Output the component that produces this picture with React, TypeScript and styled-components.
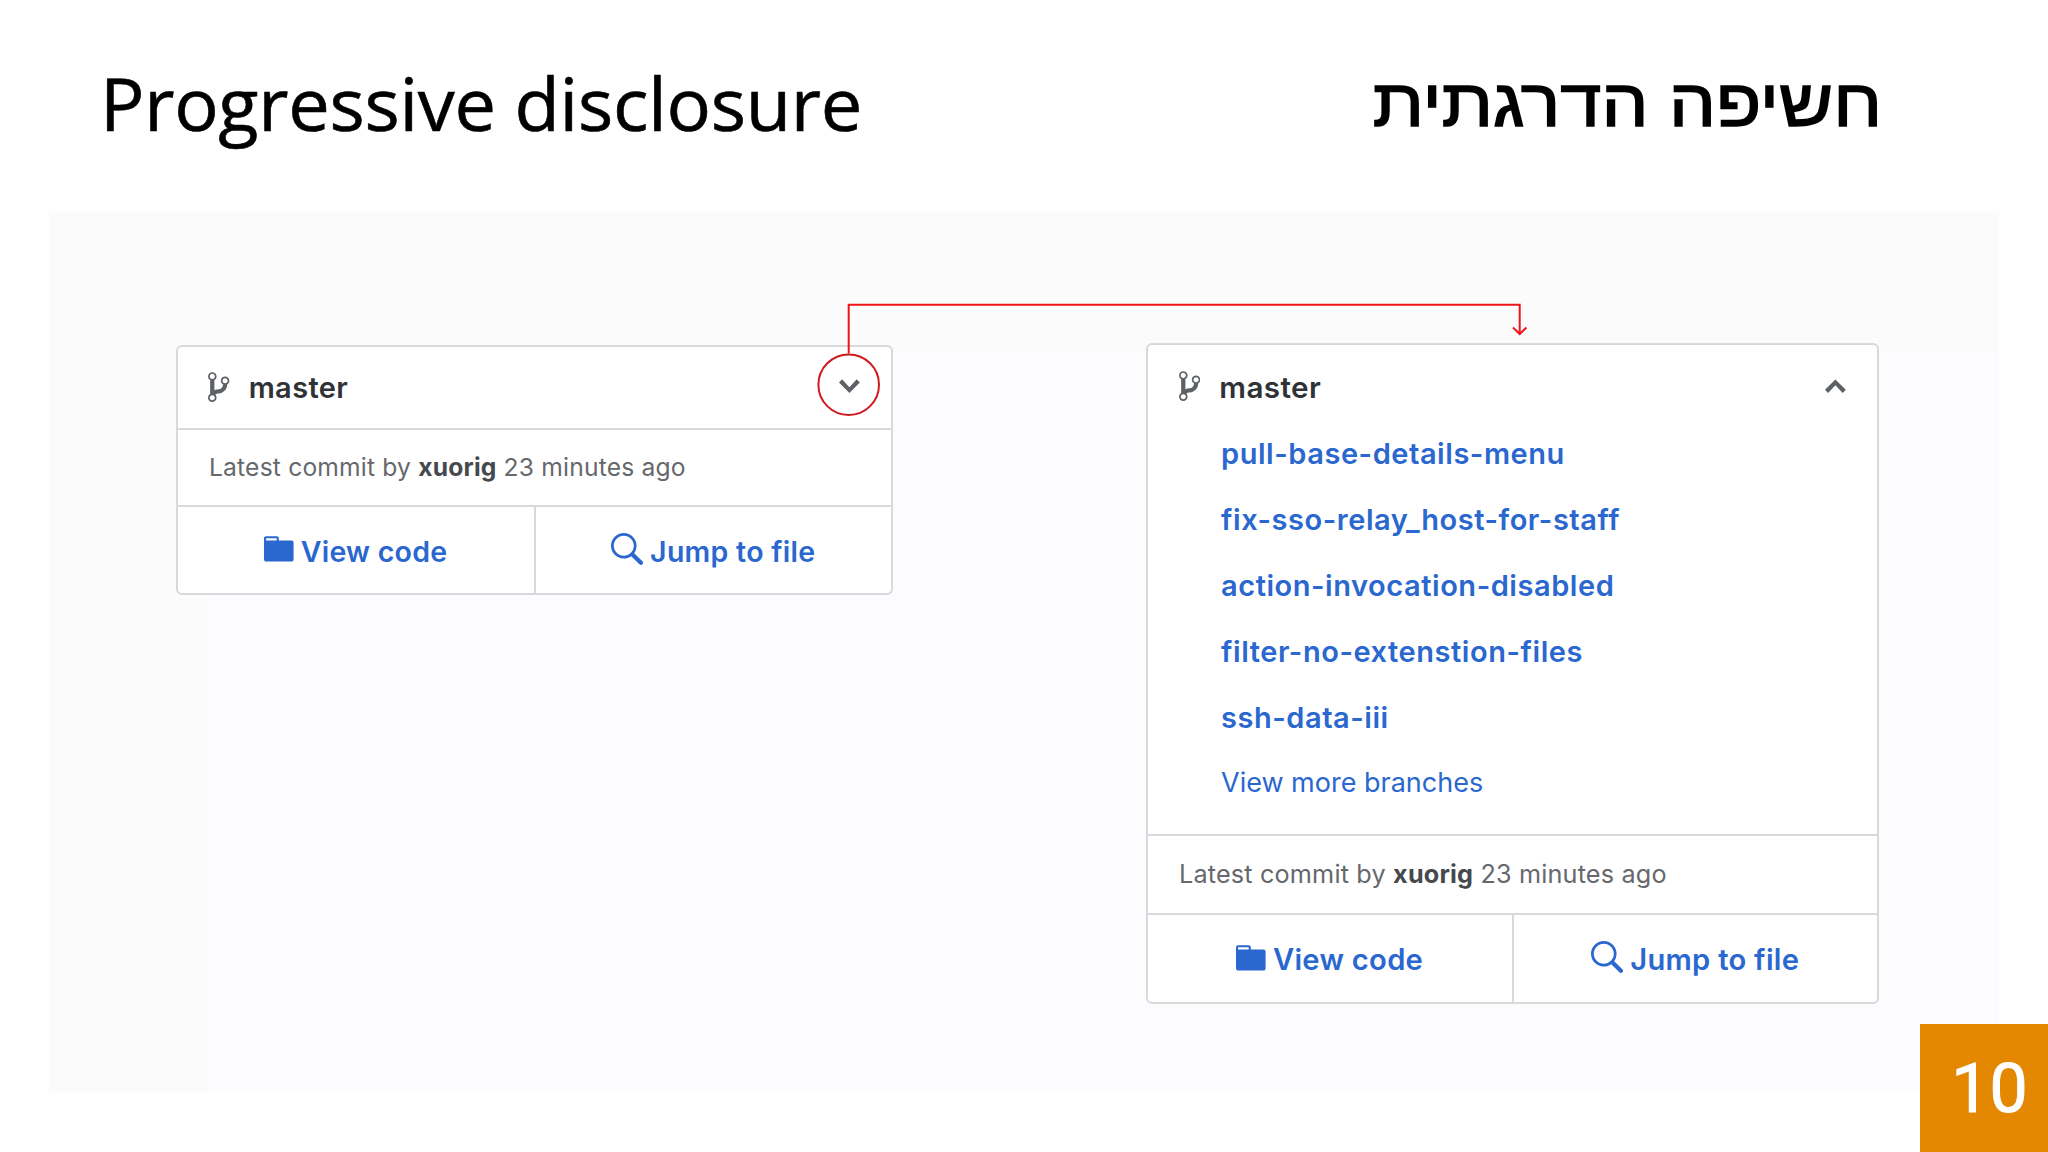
import React from 'react';
import styled, { createGlobalStyle } from 'styled-components';

const GlobalStyle = createGlobalStyle`
  * {
    box-sizing: border-box;
  }

  body {
    margin: 0;
    background: #ffffff;
  }
`;

const Slide = styled.main`
  position: relative;
  width: 2048px;
  height: 1152px;
  overflow: hidden;
  display: flex;
  flex-direction: column;
  background: #ffffff;
  font-family: Inter, 'Liberation Sans', sans-serif;
`;

const Header = styled.header`
  display: flex;
  justify-content: space-between;
  align-items: center;
  height: 212px;
  padding: 0 166px 7px 100px;
  color: #000000;
`;

const Title = styled.h1`
  margin: 0;
  font-family: 'Open Sans', sans-serif;
  font-size: 74px;
  font-weight: 400;
  line-height: 100px;
  letter-spacing: -0.3px;
  white-space: nowrap;
  -webkit-text-stroke: 0.6px currentColor;
`;

const HebrewTitle = styled.h1`
  margin: 0;
  font-family: 'Liberation Sans', sans-serif;
  font-size: 67px;
  font-weight: 400;
  line-height: 100px;
  white-space: nowrap;
  -webkit-text-stroke: 1.5px currentColor;
  transform: scaleX(1.107);
  transform-origin: right center;
`;

const Panel = styled.section`
  display: flex;
  justify-content: space-between;
  align-items: flex-start;
  width: 1950px;
  height: 880px;
  margin-left: 49px;
  padding: 131px 120px 0 127px;
  background:
    linear-gradient(#fbfbfb, #fbfbfb) 0 0 / 159px 100% no-repeat,
    linear-gradient(#fbfbfb 0 138px, #fcfcfe 138px);
`;

const Card = styled.article<{ $width: number; $size: number; $drop?: number }>`
  width: ${({ $width }) => $width}px;
  margin-top: ${({ $drop = 0 }) => $drop}px;
  font-size: ${({ $size }) => $size}px;
  background: #ffffff;
  border: 2px solid #d7d9db;
  border-radius: 6px;
`;

const BranchRow = styled.div<{ $height: number; $top: number }>`
  display: flex;
  align-items: center;
  height: ${({ $height }) => $height}px;
  padding: ${({ $top }) => $top}px 31px 0 1.08em;
  color: #5d6166;
`;

const BranchName = styled.span`
  flex: 1;
  margin-left: 19px;
  color: #2f3236;
  font-size: 1.035em;
  font-weight: 600;
  line-height: 40px;
  letter-spacing: 0.4px;
`;

const BranchList = styled.ul`
  margin: 0;
  padding: 0 0 21px 73px;
  list-style: none;
`;

const BranchItem = styled.li<{ $more?: boolean }>`
  height: ${({ $more }) => ($more ? 62 : 66)}px;
  line-height: ${({ $more }) => ($more ? 63 : 66)}px;
  color: #2a67cf;
  font-size: ${({ $more }) => ($more ? 27 : 29)}px;
  font-weight: ${({ $more }) => ($more ? 400 : 600)};
  letter-spacing: ${({ $more }) => ($more ? 0 : 0.55)}px;
  white-space: nowrap;
`;

const CommitRow = styled.p<{ $height: number }>`
  height: ${({ $height }) => $height}px;
  margin: 0;
  padding-left: 31px;
  border-top: 2px solid #d7d9db;
  line-height: ${({ $height }) => $height - 2}px;
  color: #65686c;
  font-size: 0.88em;
  letter-spacing: 0.18px;
  white-space: nowrap;

  strong {
    color: #45494e;
    font-weight: 700;
  }
`;

const Actions = styled.div<{ $height: number }>`
  display: grid;
  grid-template-columns: calc(50% - 1px) 1fr;
  height: ${({ $height }) => $height}px;
  border-top: 2px solid #d7d9db;
`;

const Action = styled.a`
  display: flex;
  justify-content: center;
  align-items: center;
  gap: 7px;
  padding-top: 2px;
  color: #2a67cf;
  font-size: 1.018em;
  font-weight: 600;
  letter-spacing: 0.28px;
  white-space: nowrap;

  & + & {
    border-left: 2px solid #d7d9db;
  }
`;

const Glyph = styled.svg<{ $lift?: number }>`
  flex: none;
  fill: currentColor;
  margin-bottom: ${({ $lift = 0 }) => $lift}px;
`;

// Runs from the collapsed card's toggle to the expanded card
const Connector = styled.svg`
  position: absolute;
  top: 0;
  left: 0;
  pointer-events: none;
`;

const PageNumber = styled.div`
  position: absolute;
  right: 0;
  bottom: 0;
  width: 128px;
  height: 128px;
  padding-left: 11px;
  background: #e38800;
  color: #ffffff;
  font-family: Roboto, sans-serif;
  font-size: 68px;
  font-weight: 400;
  line-height: 131px;
  text-align: center;
  -webkit-text-stroke: 1px currentColor;
`;

const BranchIcon = () => (
  <Glyph width="21.4" height="34.2" viewBox="0 0 10 16" $lift={2}>
    <path d="M10 5c0-1.11-.89-2-2-2a1.993 1.993 0 0 0-1 3.72v.3c-.02.52-.23.98-.63 1.38-.4.4-.86.61-1.38.63-.83.02-1.48.16-2 .45V4.72a1.993 1.993 0 0 0-1-3.72C.88 1 0 1.89 0 3a2 2 0 0 0 1 1.72v6.56c-.59.35-1 .99-1 1.72 0 1.11.89 2 2 2 1.11 0 2-.89 2-2 0-.53-.2-1-.53-1.36.09-.06.48-.41.59-.47.25-.11.56-.17.94-.17 1.05-.05 1.95-.45 2.75-1.25S8.95 7.77 9 6.73h-.02C9.59 6.37 10 5.73 10 5zM2 1.8c.66 0 1.2.55 1.2 1.2 0 .65-.55 1.2-1.2 1.2C1.35 4.2.8 3.65.8 3c0-.65.55-1.2 1.2-1.2zm0 12.41c-.66 0-1.2-.55-1.2-1.2 0-.65.55-1.2 1.2-1.2.65 0 1.2.55 1.2 1.2 0 .65-.55 1.2-1.2 1.2zm6-8c-.66 0-1.2-.55-1.2-1.2 0-.65.55-1.2 1.2-1.2.65 0 1.2.55 1.2 1.2 0 .65-.55 1.2-1.2 1.2z" />
  </Glyph>
);

const Chevron: React.FC<{ open?: boolean }> = ({ open }) => (
  <Glyph width="20.8" height="33.3" viewBox="0 0 10 16" $lift={open ? 3 : 2}>
    <path
      d={
        open
          ? 'M10 10l-1.5 1.5L5 7.75 1.5 11.5 0 10l5-5 5 5z'
          : 'M5 11L0 6l1.5-1.5L5 8.25 8.5 4.5 10 6l-5 5z'
      }
    />
  </Glyph>
);

const FolderIcon = () => (
  <Glyph width="29.6" height="33.8" viewBox="0 0 14 16" $lift={4}>
    <path d="M13 4H7V3c0-.66-.31-1-1-1H1c-.55 0-1 .45-1 1v10c0 .55.45 1 1 1h12c.55 0 1-.45 1-1V5c0-.55-.45-1-1-1zM6 4H1V3h5v1z" />
  </Glyph>
);

const SearchIcon = () => (
  <Glyph width="32" height="32" viewBox="1 0 15 15" $lift={5}>
    <path d="M15.7 13.3l-3.81-3.83A5.93 5.93 0 0 0 13 6c0-3.31-2.69-6-6-6S1 2.69 1 6s2.69 6 6 6c1.3 0 2.48-.41 3.47-1.11l3.83 3.81c.19.2.45.3.7.3.25 0 .52-.09.7-.3a.996.996 0 0 0 0-1.41v.01zM7 10.7c-2.59 0-4.7-2.11-4.7-4.7 0-2.59 2.11-4.7 4.7-4.7 2.59 0 4.7 2.11 4.7 4.7 0 2.59-2.11 4.7-4.7 4.7z" />
  </Glyph>
);

const branches = [
  'pull-base-details-menu',
  'fix-sso-relay_host-for-staff',
  'action-invocation-disabled',
  'filter-no-extenstion-files',
  'ssh-data-iii',
];

const CardFooter: React.FC<{ commit: number; actions: number }> = ({ commit, actions }) => (
  <>
    <CommitRow $height={commit}>
      Latest commit by <strong>xuorig</strong> 23 minutes ago
    </CommitRow>
    <Actions $height={actions}>
      <Action>
        <FolderIcon />
        View code
      </Action>
      <Action>
        <SearchIcon />
        Jump to file
      </Action>
    </Actions>
  </>
);

const App: React.FC = () => {
  return (
    <Slide>
      <GlobalStyle />
      <Header>
        <Title>Progressive disclosure</Title>
        <HebrewTitle lang="he" dir="rtl">
          חשיפה הדרגתית
        </HebrewTitle>
      </Header>

      <Panel>
        <Card $width={717} $size={28} $drop={2}>
          <BranchRow $height={81} $top={1}>
            <BranchIcon />
            <BranchName>master</BranchName>
            <Chevron />
          </BranchRow>
          <CardFooter commit={77} actions={88} />
        </Card>

        <Card $width={733} $size={28.65}>
          <BranchRow $height={76} $top={8}>
            <BranchIcon />
            <BranchName>master</BranchName>
            <Chevron open />
          </BranchRow>
          <BranchList>
            {branches.map((branch) => (
              <BranchItem key={branch}>{branch}</BranchItem>
            ))}
            <BranchItem $more>View more branches</BranchItem>
          </BranchList>
          <CardFooter commit={79} actions={89} />
        </Card>
      </Panel>

      <Connector width="2048" height="430" viewBox="0 0 2048 430" fill="none" strokeWidth="2">
        <circle cx="848.7" cy="384.7" r="30.3" stroke="#cf1a20" />
        <path d="M848.7 353.5V304.8H1519.7V334" stroke="#ee1418" />
        <path d="M1513 327.5l6.7 6.5 6.7-6.5" stroke="#ee1418" />
      </Connector>

      <PageNumber>10</PageNumber>
    </Slide>
  );
};

export default App;
